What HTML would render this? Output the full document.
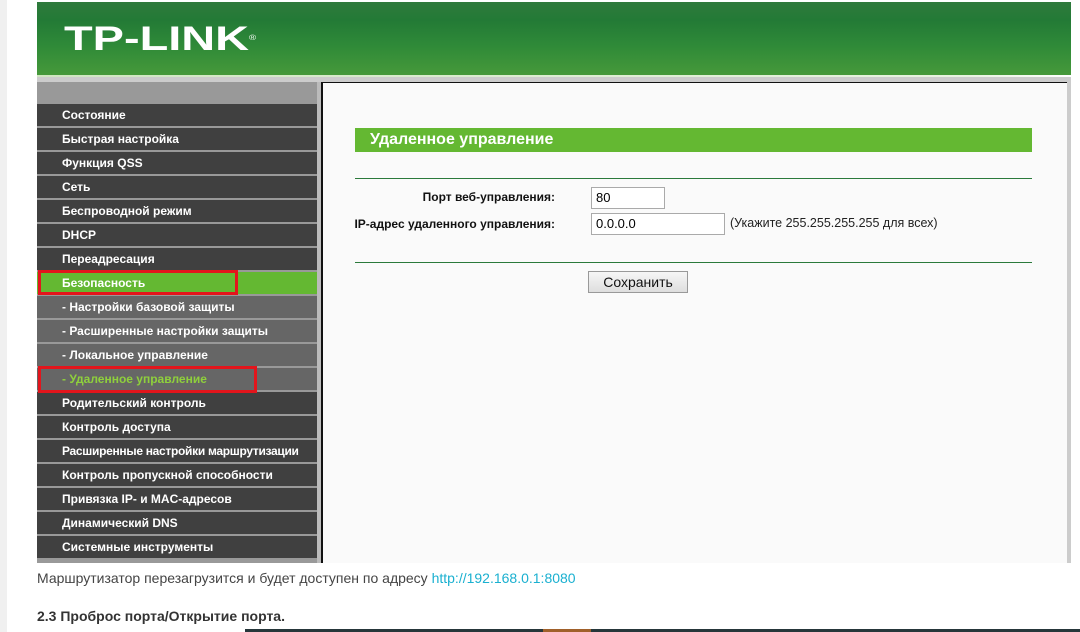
<!DOCTYPE html>
<html><head><meta charset="utf-8"><style>
*{margin:0;padding:0;box-sizing:border-box}
body{width:1080px;height:632px;background:#fff;position:relative;overflow:hidden;font-family:"Liberation Sans",Arial,sans-serif}
.abs{position:absolute}
.hdr{left:37px;top:2px;width:1034px;height:73px;background:linear-gradient(#2f7a3c 0%,#237a36 25%,#2f8a38 60%,#46993a 100%)}
.logo{left:64px;top:20px;color:#fff;font-weight:900;font-size:34px;line-height:38px;letter-spacing:0px;transform:scaleX(1.38);transform-origin:left top;font-family:"Liberation Sans",Arial,sans-serif}
.side{left:37px;top:82px;width:280px;height:481px;background:#999}
.item{position:absolute;left:0;width:280px;height:22px;background:#404040;color:#fff;font-weight:bold;font-size:12px;line-height:22px;padding-left:25px}
.sub{background:#666}
.act{background:#64b832}
.red{position:absolute;border:3px solid #e3151c}
.content{left:323px;top:82px;width:744px;height:481px;background:#fafafa}
.title{left:355px;top:128px;width:677px;height:24px;background:#64b832;color:#fff;font-weight:bold;font-size:16px;line-height:24px;padding-left:15px}
.line{left:355px;width:677px;height:1px;background:#2b7a3b}
.lbl{font-size:12px;font-weight:bold;color:#111;text-align:right;width:300px;left:255px}
.inp{background:#fff;border:1px solid #aaa;font-size:13px;padding-left:4px;line-height:20px}
</style></head><body>
<div class="abs" style="left:0;top:0;width:7px;height:632px;background:#f0f0f0"></div>
<div class="abs hdr"></div>
<div class="abs logo">TP-LINK<span style="font-size:7px;vertical-align:top;font-weight:normal">®</span></div>
<div class="abs" style="left:37px;top:75px;width:1034px;height:7px;background:#ccc"></div>
<div class="abs" style="left:37px;top:75px;width:1034px;height:2px;background:linear-gradient(90deg,#cfe6c0,#e8f3e0 90%,#fff)"></div>
<div class="abs side">
<div class="item" style="top:22px">Состояние</div>
<div class="item" style="top:46px">Быстрая настройка</div>
<div class="item" style="top:70px">Функция QSS</div>
<div class="item" style="top:94px">Сеть</div>
<div class="item" style="top:118px">Беспроводной режим</div>
<div class="item" style="top:142px">DHCP</div>
<div class="item" style="top:166px">Переадресация</div>
<div class="item act" style="top:190px">Безопасность</div>
<div class="item sub" style="top:214px">- Настройки базовой защиты</div>
<div class="item sub" style="top:238px">- Расширенные настройки защиты</div>
<div class="item sub" style="top:262px">- Локальное управление</div>
<div class="item sub" style="top:286px;color:#8fd03c">- Удаленное управление</div>
<div class="item" style="top:310px">Родительский контроль</div>
<div class="item" style="top:334px">Контроль доступа</div>
<div class="item" style="top:358px;letter-spacing:-0.3px">Расширенные настройки маршрутизации</div>
<div class="item" style="top:382px">Контроль пропускной способности</div>
<div class="item" style="top:406px">Привязка IP- и MAC-адресов</div>
<div class="item" style="top:430px">Динамический DNS</div>
<div class="item" style="top:454px">Системные инструменты</div>
</div>
<div class="red" style="left:38px;top:270px;width:200px;height:25px"></div>
<div class="red" style="left:38px;top:366px;width:219px;height:27px"></div>
<div class="abs" style="left:317px;top:82px;width:4px;height:481px;background:#bbb"></div>
<div class="abs" style="left:321px;top:82px;width:2px;height:481px;background:#111"></div>
<div class="abs content"></div>
<div class="abs" style="left:1067px;top:82px;width:4px;height:481px;background:#ccc"></div>
<div class="abs" style="left:323px;top:82px;width:744px;height:1px;background:#111"></div>
<div class="abs title">Удаленное управление</div>
<div class="abs line" style="top:178px"></div>
<div class="abs line" style="top:262px"></div>
<div class="abs lbl" style="top:190px">Порт веб-управления:</div>
<div class="abs lbl" style="top:217px">IP-адрес удаленного управления:</div>
<div class="abs inp" style="left:591px;top:187px;width:74px;height:22px">80</div>
<div class="abs inp" style="left:591px;top:213px;width:134px;height:22px">0.0.0.0</div>
<div class="abs" style="left:730px;top:216px;font-size:12.5px;color:#222">(Укажите 255.255.255.255 для всех)</div>
<div class="abs" style="left:588px;top:271px;width:100px;height:22px;border:1px solid #999;background:linear-gradient(#f6f6f6,#dedede);font-size:14px;text-align:center;line-height:20px;color:#111">Сохранить</div>
<div class="abs" style="left:37px;top:570px;font-size:14px;color:#444">Маршрутизатор перезагрузится и будет доступен по адресу <span style="color:#1ab0d0">http://192.168.0.1:8080</span></div>
<div class="abs" style="left:37px;top:608px;font-size:14px;font-weight:bold;color:#333">2.3 Проброс порта/Открытие порта.</div>
<div class="abs" style="left:245px;top:629px;width:835px;height:3px;background:#26363a"></div>
<div class="abs" style="left:543px;top:629px;width:48px;height:3px;background:#a0602a"></div>
</body></html>
